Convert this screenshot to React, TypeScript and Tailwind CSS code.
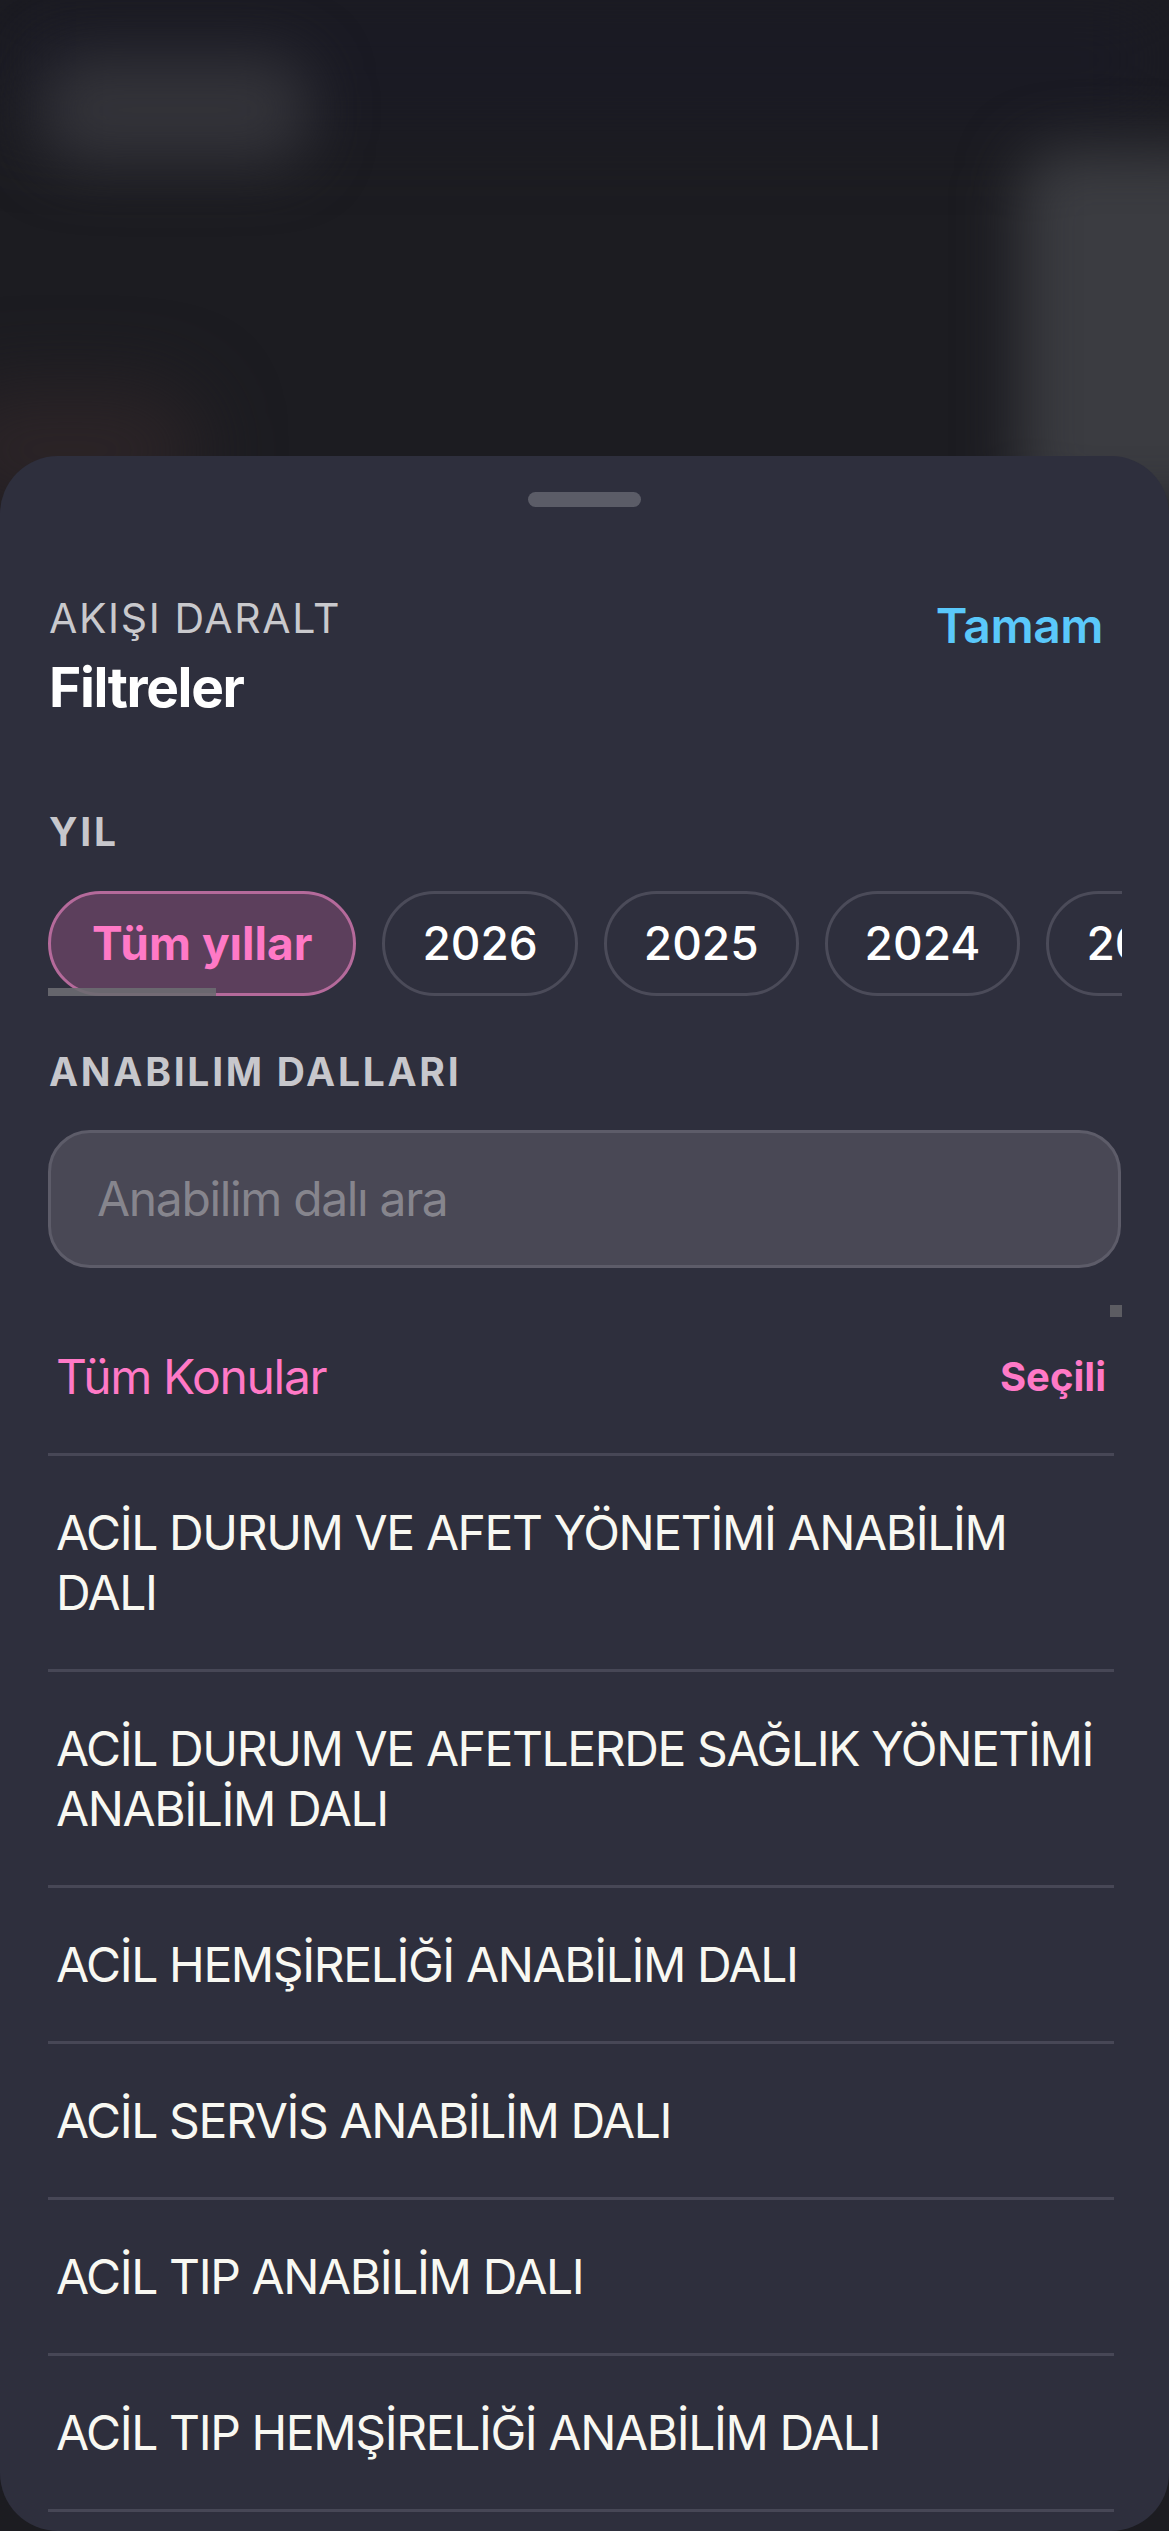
import React from "react";

const years = ["2026", "2025", "2024", "2023", "2022"];

const items: string[] = [
  "ACİL DURUM VE AFET YÖNETİMİ ANABİLİM DALI",
  "ACİL DURUM VE AFETLERDE SAĞLIK YÖNETİMİ ANABİLİM DALI",
  "ACİL HEMŞİRELİĞİ ANABİLİM DALI",
  "ACİL SERVİS ANABİLİM DALI",
  "ACİL TIP ANABİLİM DALI",
  "ACİL TIP HEMŞİRELİĞİ ANABİLİM DALI",
];

export default function App() {
  return (
    <div className="relative w-[1169px] h-[2531px] overflow-hidden bg-[#1c1c21] font-[Inter,'Noto_Sans',sans-serif]">
      {/* blurred backdrop */}
      <div className="absolute inset-x-0 top-0 h-[120px] bg-[#1a1a24] blur-2xl" />
      <div className="absolute left-[40px] top-[55px] w-[270px] h-[110px] rounded-[40px] bg-[#333339] blur-[30px]" />
      <div className="absolute left-[1020px] top-[150px] w-[220px] h-[360px] rounded-[40px] bg-[#3b3c41] blur-[30px]" />
      <div className="absolute left-[-60px] top-[390px] w-[260px] h-[120px] rounded-full bg-[#2c2427] blur-[40px]" />

      <div className="relative flex flex-col pt-[456px]">
        <div className="h-[2075px] rounded-[58px] bg-[#2e2f3d] flex flex-col">
          {/* handle */}
          <div className="mt-[36px] mx-auto w-[113px] h-[15px] rounded-full bg-[#5b5c67]" />

          {/* header */}
          <div className="mt-[87px] pl-[49px] pr-[66px] flex items-start justify-between">
            <div className="flex flex-col">
              <div className="text-[41px] leading-[49px] tracking-[0.04em] text-[#c9c9cd]">AKIŞI DARALT</div>
              <div className="mt-[11px] text-[55px] leading-[66px] font-bold tracking-tight text-white">Filtreler</div>
            </div>
            <div className="mt-[3px] text-[48px] leading-[58px] font-semibold tracking-[-0.01em] text-[#5ac8fa]">Tamam</div>
          </div>

          {/* YIL */}
          <div className="mt-[88px] pl-[49px] text-[39px] leading-[47px] font-bold tracking-[0.07em] text-[#c7c7cc]">YIL</div>

          <div className="mt-[36px] ml-[48px] mr-[47px] relative overflow-hidden">
            <div className="flex gap-[26px] w-max">
              <div className="h-[105px] px-[41px] flex items-center rounded-full border-[3px] border-[#b56a9b] bg-[#5c3f5c] text-[46px] font-bold text-[#ff79c6] whitespace-nowrap">
                Tüm yıllar
              </div>
              {years.map((y) => (
                <div
                  key={y}
                  className="h-[105px] px-[37px] flex items-center rounded-full border-[3px] border-[#4b4b59] text-[46px] font-medium text-white"
                >
                  {y}
                </div>
              ))}
            </div>
            <div className="absolute left-0 top-[97px] w-[168px] h-[12px] bg-[#6b6b71]/90" />
          </div>

          {/* ANABILIM DALLARI */}
          <div className="mt-[52px] pl-[49px] text-[39px] leading-[47px] font-bold tracking-[0.07em] text-[#c7c7cc]">
            ANABILIM DALLARI
          </div>

          <div className="mt-[35px] ml-[48px] mr-[48px] h-[138px] rounded-[42px] border-[3px] border-[#5d5c69] bg-[#494855] flex items-center pl-[46px]">
            <span className="text-[48px] tracking-[-0.028em] text-[#86858d]">Anabilim dalı ara</span>
          </div>

          {/* list */}
          <div className="relative mt-[32px] ml-[48px] mr-[55px] flex flex-col">
            <div className="absolute top-[5px] right-[-8px] w-[12px] h-[12px] bg-[#5c5c62]" />
            <div className="pt-[47px] pb-[46px] px-[8px] border-b-[3px] border-[#474756] flex items-center justify-between">
              <span className="text-[48px] leading-[60px] tracking-[-0.028em] text-[#ff79c6]">Tüm Konular</span>
              <span className="text-[40px] leading-[60px] font-bold text-[#ff79c6]">Seçili</span>
            </div>
            {items.map((t) => (
              <div key={t} className="pt-[47px] pb-[46px] pl-[8px] pr-0 border-b-[3px] border-[#474756]">
                <div className="text-[48px] leading-[60px] tracking-[-0.029em] text-[#f8f8f2]">{t}</div>
              </div>
            ))}
          </div>
        </div>
      </div>
    </div>
  );
}
